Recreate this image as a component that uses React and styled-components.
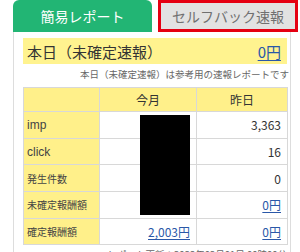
import React from 'react';
import styled, { createGlobalStyle } from 'styled-components';

const rows = [
	{ label: 'imp', month: null, yesterday: '3,363', latin: true },
	{ label: 'click', month: null, yesterday: '16', latin: true },
	{ label: '発生件数', month: null, yesterday: '0' },
	{ label: '未確定報酬額', month: null, yesterday: '0円', link: true },
	{ label: '確定報酬額', month: '2,003円', yesterday: '0円', link: true },
];

function App() {
	return (
		<>
			<GlobalStyle />
			<StyledPage>
				<StyledTabs>
					<StyledTab active>簡易レポート</StyledTab>
					<StyledTab>セルフバック速報</StyledTab>
				</StyledTabs>

				<StyledPanel>
					<StyledTodayBar>
						<span>本日（未確定速報）</span>
						<StyledLink>0円</StyledLink>
					</StyledTodayBar>
					<StyledNote>本日（未確定速報）は参考用の速報レポートです</StyledNote>

					<StyledTableWrap>
						<StyledTable>
							<thead>
								<tr>
									<StyledHead />
									<StyledHead>今月</StyledHead>
									<StyledHead>昨日</StyledHead>
								</tr>
							</thead>
							<tbody>
								{rows.map((row) => (
									<tr key={row.label}>
										<StyledLabel $latin={row.latin}>{row.label}</StyledLabel>
										<StyledCell>
											{row.month && <StyledLink>{row.month}</StyledLink>}
										</StyledCell>
										<StyledCell>
											{row.link ? <StyledLink>{row.yesterday}</StyledLink> : row.yesterday}
										</StyledCell>
									</tr>
								))}
							</tbody>
						</StyledTable>
						{/* hidden monthly figures */}
						<StyledMask />
					</StyledTableWrap>

					<StyledUpdated>レポート更新：2023年02月01日 00時00分</StyledUpdated>
				</StyledPanel>
			</StyledPage>
		</>
	);
}

const GlobalStyle = createGlobalStyle`
	body {
		margin: 0;
		background: #ffffff;
		font-family: "Noto Sans CJK JP", "Noto Sans", sans-serif;
		color: #333333;
	}
`;

const StyledPage = styled.div`
	width: 300px;
	height: 252px;
	overflow: hidden;
	padding-left: 13px;
	box-sizing: border-box;
`;

const StyledTabs = styled.div`
	display: flex;
	gap: 6px;
	height: 32px;
`;

const StyledTab = styled.div`
	box-sizing: border-box;
	width: ${(props) => (props.active ? '139px' : '140px')};
	height: 32px;
	display: flex;
	align-items: center;
	justify-content: center;
	font-size: 14px;
	border-radius: ${(props) => (props.active ? '6px 6px 0 0' : '0')};
	background-color: ${(props) => (props.active ? '#22b574' : '#e2e2e2')};
	color: ${(props) => (props.active ? '#ffffff' : '#707070')};
	border: ${(props) => (props.active ? 'none' : '3px solid #e50012')};
`;

const StyledPanel = styled.div`
	box-sizing: border-box;
	width: 278px;
	border: 1px solid #dddddd;
	border-top: none;
	padding: 6px 3px 0 9px;
`;

const StyledTodayBar = styled.div`
	height: 26px;
	background-color: #fff38f;
	display: flex;
	align-items: center;
	justify-content: space-between;
	padding: 0 6px 0 4px;
	font-size: 15px;
	color: #333333;
`;

const StyledLink = styled.span`
	color: #2a58a8;
	text-decoration: underline;
	text-underline-offset: 2px;
`;

const StyledNote = styled.div`
	text-align: right;
	font-size: 9.5px;
	color: #666666;
	height: 23px;
	line-height: 20px;
	margin-right: -2px;
`;

const StyledTableWrap = styled.div`
	position: relative;
`;

const StyledTable = styled.table`
	width: 265px;
	border-collapse: collapse;
	table-layout: fixed;
	font-size: 12px;

	th:nth-child(1),
	td:nth-child(1) {
		width: 75px;
	}
	th:nth-child(2),
	td:nth-child(2) {
		width: 96px;
	}
`;

const StyledHead = styled.th`
	height: 23px;
	padding: 0;
	background-color: #fff08a;
	border: 1px solid #d8d8d8;
	font-weight: normal;
	font-size: 12px;
	color: #333333;
`;

const StyledLabel = styled.td`
	height: 25.7px;
	padding: 0 3px;
	background-color: #fff08a;
	border: 1px solid #d8d8d8;
	font-family: ${(props) => (props.$latin ? '"Liberation Sans", sans-serif' : 'inherit')};
	font-size: ${(props) => (props.$latin ? '12px' : '10px')};
	color: #444444;
	white-space: nowrap;
`;

const StyledCell = styled.td`
	height: 25.7px;
	padding: 0 6px 0 0;
	border: 1px solid #d8d8d8;
	text-align: right;
	font-size: 12px;
	color: #333333;
`;

const StyledMask = styled.div`
	position: absolute;
	left: 117px;
	top: 28px;
	width: 50px;
	height: 100px;
	background: #000000;
`;

const StyledUpdated = styled.div`
	text-align: right;
	font-size: 9.5px;
	color: #666666;
	padding-top: 2px;
`;

export default App;
